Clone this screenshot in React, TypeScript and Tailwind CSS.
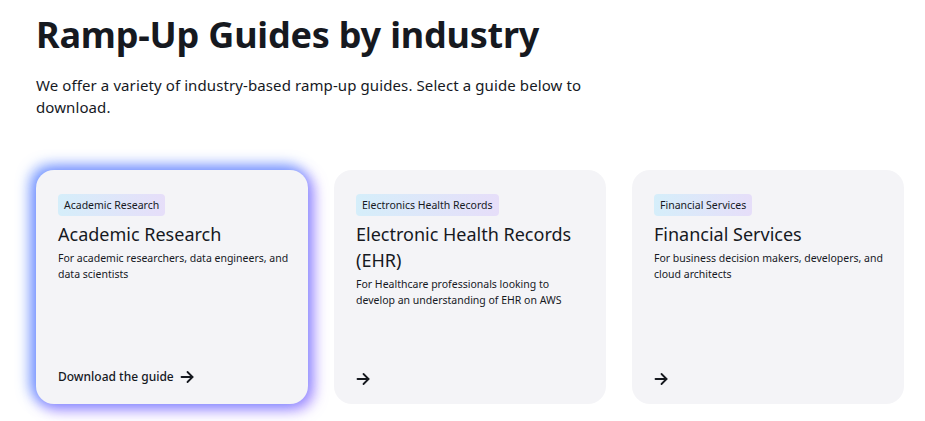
import React from 'react';

interface Guide {
    tag: string;
    title: string;
    description: string;
    active?: boolean;
}

const guides: Guide[] = [
    {
        tag: 'Academic Research',
        title: 'Academic Research',
        description: 'For academic researchers, data engineers, and data scientists',
        active: true,
    },
    {
        tag: 'Electronics Health Records',
        title: 'Electronic Health Records (EHR)',
        description: 'For Healthcare professionals looking to develop an understanding of EHR on AWS',
    },
    {
        tag: 'Financial Services',
        title: 'Financial Services',
        description: 'For business decision makers, developers, and cloud architects',
    },
];

function ArrowRight() {
    return (
        <svg width="14" height="14" viewBox="0 0 14 14" fill="none" stroke="currentColor" strokeWidth="1.8" strokeLinecap="round" strokeLinejoin="round">
            <path d="M1.5 7h11" />
            <path d="M7.5 2l5 5-5 5" />
        </svg>
    );
}

function GuideCard({ guide }: { guide: Guide }) {
    return (
        <div
            className={`flex flex-col h-[234px] rounded-[18px] bg-[#f4f4f7] pl-[22px] pr-[17px] pt-[21px] pb-[18px] ${
                guide.active
                    ? 'shadow-[-4px_-3px_14px_2px_rgba(80,130,255,0.75),4px_4px_14px_2px_rgba(150,110,255,0.75)]'
                    : ''
            }`}
        >
            <div>
                <span className="inline-block rounded-[4px] bg-gradient-to-r from-[#d5eefa] to-[#e6def9] px-[6px] py-[4px] text-[10.5px] leading-[14px] text-[#16191f]">
                    {guide.tag}
                </span>
            </div>
            <h3 className="mt-[5px] text-[18px] leading-[26px] text-[#16191f]">{guide.title}</h3>
            <p className="mt-[3px] text-[10.5px] leading-[16px] text-[#16191f]">{guide.description}</p>
            <div className="mt-auto flex items-center gap-[6px] text-[12px] font-medium text-[#16191f]">
                {guide.active && <span>Download the guide</span>}
                <ArrowRight />
            </div>
        </div>
    );
}

export default function App() {
    return (
        <div className="min-h-screen bg-white px-9 pt-[11px] font-['Noto_Sans',sans-serif] text-[#16191f]">
            <h1 className="text-[36px] font-bold leading-[48px] tracking-[-0.2px]">Ramp-Up Guides by industry</h1>
            <p className="mt-[15px] max-w-[560px] text-[15px] leading-[22px] tracking-[0.1px]">
                We offer a variety of industry-based ramp-up guides. Select a guide below to download.
            </p>
            <div className="mt-[52px] grid grid-cols-3 gap-[26px] w-[868px]">
                {guides.map((g) => (
                    <GuideCard key={g.tag} guide={g} />
                ))}
            </div>
        </div>
    );
}
